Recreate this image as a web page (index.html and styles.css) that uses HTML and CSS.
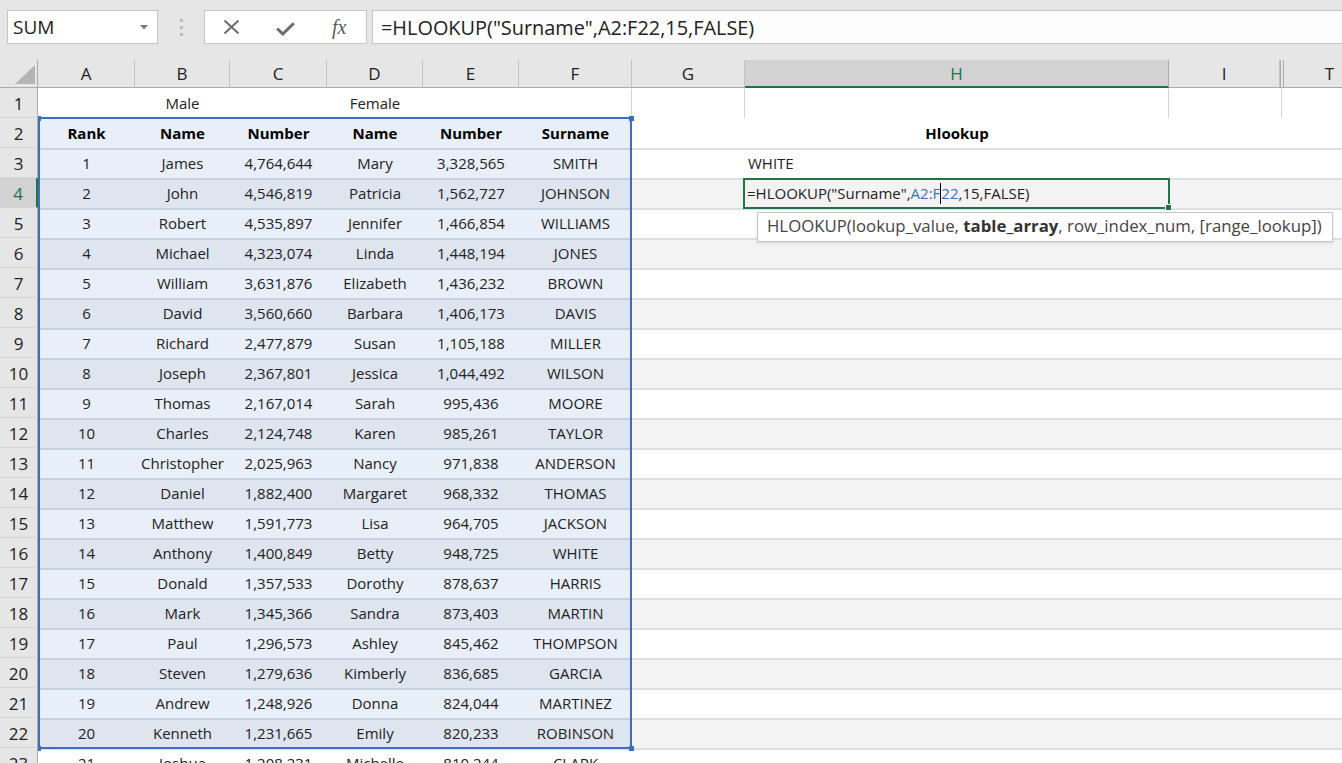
FILE: index.html
```html
<!DOCTYPE html>
<html>
<head>
<meta charset="utf-8">
<link rel="stylesheet" href="styles.css">
</head>
<body>
<div class="topbar">
  <div class="namebox"><span>SUM</span><svg width="8" height="5" viewBox="0 0 8 5"><polygon points="0,0 8,0 4,4.5" fill="#7a7a7a"/></svg></div>
  <div class="grip"><i></i><i></i><i></i></div>
  <div class="fxbtns">
    <div class="fxbtn"><svg width="17" height="16" viewBox="0 0 17 16"><path d="M1.5 1.5 L15.5 14.5 M15.5 1.5 L1.5 14.5" stroke="#6b6b6b" stroke-width="2" fill="none"/></svg></div>
    <div class="fxbtn chk"><svg width="19" height="14" viewBox="0 0 19 14"><polyline points="1.2,6.5 6.8,12 17.8,1.2" stroke="#6b6b6b" stroke-width="3" fill="none"/></svg></div>
    <div class="fxbtn fx">fx</div>
  </div>
  <div class="formula">=HLOOKUP("Surname",A2:F22,15,FALSE)</div>
</div>

<div class="colhead">
  <div class="corner"><svg width="20" height="19" viewBox="0 0 20 19"><polygon points="20,0 20,19 0,19" fill="#b4b4b4"/></svg></div>
  <div class="hc ca">A</div><div class="hc cb">B</div><div class="hc cc">C</div><div class="hc cd">D</div><div class="hc ce">E</div><div class="hc cf">F</div><div class="hc cg">G</div><div class="hc ch hsel">H</div><div class="hc ci">I</div><div class="hc cx"></div><div class="hc ct">T</div>
</div>

<div class="grid">
  <div class="row r1"><div class="rh">1</div><div class="tbl"><div class="c ca"></div><div class="c cb">Male</div><div class="c cc"></div><div class="c cd">Female</div><div class="c ce"></div><div class="c cf"></div></div><div class="rest"><div class="c cg"></div><div class="c ch"></div><div class="c ci"></div><div class="c cx"></div><div class="c ct"></div></div></div>
  <div class="row light"><div class="rh">2</div><div class="tbl b"><div class="c ca">Rank</div><div class="c cb">Name</div><div class="c cc">Number</div><div class="c cd">Name</div><div class="c ce">Number</div><div class="c cf">Surname</div></div><div class="rest"><div class="c cg"></div><div class="c ch b">Hlookup</div><div class="c ci"></div><div class="c cx"></div><div class="c ct"></div></div></div>
  <div class="row lined light"><div class="rh">3</div><div class="tbl"><div class="c ca">1</div><div class="c cb">James</div><div class="c cc">4,764,644</div><div class="c cd">Mary</div><div class="c ce">3,328,565</div><div class="c cf">SMITH</div></div><div class="rest"><div class="c cg"></div><div class="c ch left">WHITE</div><div class="c ci"></div><div class="c cx"></div><div class="c ct"></div></div></div>
  <div class="row lined dark"><div class="rh sel">4</div><div class="tbl"><div class="c ca">2</div><div class="c cb">John</div><div class="c cc">4,546,819</div><div class="c cd">Patricia</div><div class="c ce">1,562,727</div><div class="c cf">JOHNSON</div></div><div class="rest"><div class="c cg"></div><div class="c ch editcell">
    <div class="editor"><span>=HLOOKUP("Surname",<span class="ref">A2:F</span><span class="caret"></span><span class="ref">22</span>,15,FALSE)</span><span class="fill"></span></div>
    <div class="tip">HLOOKUP(lookup_value,&nbsp;<b>table_array</b>, row_index_num, [range_lookup])</div>
  </div><div class="c ci"></div><div class="c cx"></div><div class="c ct"></div></div></div>
  <div class="row lined light"><div class="rh">5</div><div class="tbl"><div class="c ca">3</div><div class="c cb">Robert</div><div class="c cc">4,535,897</div><div class="c cd">Jennifer</div><div class="c ce">1,466,854</div><div class="c cf">WILLIAMS</div></div><div class="rest"><div class="c cg"></div><div class="c ch"></div><div class="c ci"></div><div class="c cx"></div><div class="c ct"></div></div></div>
  <div class="row lined dark"><div class="rh">6</div><div class="tbl"><div class="c ca">4</div><div class="c cb">Michael</div><div class="c cc">4,323,074</div><div class="c cd">Linda</div><div class="c ce">1,448,194</div><div class="c cf">JONES</div></div><div class="rest"><div class="c cg"></div><div class="c ch"></div><div class="c ci"></div><div class="c cx"></div><div class="c ct"></div></div></div>
  <div class="row lined light"><div class="rh">7</div><div class="tbl"><div class="c ca">5</div><div class="c cb">William</div><div class="c cc">3,631,876</div><div class="c cd">Elizabeth</div><div class="c ce">1,436,232</div><div class="c cf">BROWN</div></div><div class="rest"><div class="c cg"></div><div class="c ch"></div><div class="c ci"></div><div class="c cx"></div><div class="c ct"></div></div></div>
  <div class="row lined dark"><div class="rh">8</div><div class="tbl"><div class="c ca">6</div><div class="c cb">David</div><div class="c cc">3,560,660</div><div class="c cd">Barbara</div><div class="c ce">1,406,173</div><div class="c cf">DAVIS</div></div><div class="rest"><div class="c cg"></div><div class="c ch"></div><div class="c ci"></div><div class="c cx"></div><div class="c ct"></div></div></div>
  <div class="row lined light"><div class="rh">9</div><div class="tbl"><div class="c ca">7</div><div class="c cb">Richard</div><div class="c cc">2,477,879</div><div class="c cd">Susan</div><div class="c ce">1,105,188</div><div class="c cf">MILLER</div></div><div class="rest"><div class="c cg"></div><div class="c ch"></div><div class="c ci"></div><div class="c cx"></div><div class="c ct"></div></div></div>
  <div class="row lined dark"><div class="rh">10</div><div class="tbl"><div class="c ca">8</div><div class="c cb">Joseph</div><div class="c cc">2,367,801</div><div class="c cd">Jessica</div><div class="c ce">1,044,492</div><div class="c cf">WILSON</div></div><div class="rest"><div class="c cg"></div><div class="c ch"></div><div class="c ci"></div><div class="c cx"></div><div class="c ct"></div></div></div>
  <div class="row lined light"><div class="rh">11</div><div class="tbl"><div class="c ca">9</div><div class="c cb">Thomas</div><div class="c cc">2,167,014</div><div class="c cd">Sarah</div><div class="c ce">995,436</div><div class="c cf">MOORE</div></div><div class="rest"><div class="c cg"></div><div class="c ch"></div><div class="c ci"></div><div class="c cx"></div><div class="c ct"></div></div></div>
  <div class="row lined dark"><div class="rh">12</div><div class="tbl"><div class="c ca">10</div><div class="c cb">Charles</div><div class="c cc">2,124,748</div><div class="c cd">Karen</div><div class="c ce">985,261</div><div class="c cf">TAYLOR</div></div><div class="rest"><div class="c cg"></div><div class="c ch"></div><div class="c ci"></div><div class="c cx"></div><div class="c ct"></div></div></div>
  <div class="row lined light"><div class="rh">13</div><div class="tbl"><div class="c ca">11</div><div class="c cb">Christopher</div><div class="c cc">2,025,963</div><div class="c cd">Nancy</div><div class="c ce">971,838</div><div class="c cf">ANDERSON</div></div><div class="rest"><div class="c cg"></div><div class="c ch"></div><div class="c ci"></div><div class="c cx"></div><div class="c ct"></div></div></div>
  <div class="row lined dark"><div class="rh">14</div><div class="tbl"><div class="c ca">12</div><div class="c cb">Daniel</div><div class="c cc">1,882,400</div><div class="c cd">Margaret</div><div class="c ce">968,332</div><div class="c cf">THOMAS</div></div><div class="rest"><div class="c cg"></div><div class="c ch"></div><div class="c ci"></div><div class="c cx"></div><div class="c ct"></div></div></div>
  <div class="row lined light"><div class="rh">15</div><div class="tbl"><div class="c ca">13</div><div class="c cb">Matthew</div><div class="c cc">1,591,773</div><div class="c cd">Lisa</div><div class="c ce">964,705</div><div class="c cf">JACKSON</div></div><div class="rest"><div class="c cg"></div><div class="c ch"></div><div class="c ci"></div><div class="c cx"></div><div class="c ct"></div></div></div>
  <div class="row lined dark"><div class="rh">16</div><div class="tbl"><div class="c ca">14</div><div class="c cb">Anthony</div><div class="c cc">1,400,849</div><div class="c cd">Betty</div><div class="c ce">948,725</div><div class="c cf">WHITE</div></div><div class="rest"><div class="c cg"></div><div class="c ch"></div><div class="c ci"></div><div class="c cx"></div><div class="c ct"></div></div></div>
  <div class="row lined light"><div class="rh">17</div><div class="tbl"><div class="c ca">15</div><div class="c cb">Donald</div><div class="c cc">1,357,533</div><div class="c cd">Dorothy</div><div class="c ce">878,637</div><div class="c cf">HARRIS</div></div><div class="rest"><div class="c cg"></div><div class="c ch"></div><div class="c ci"></div><div class="c cx"></div><div class="c ct"></div></div></div>
  <div class="row lined dark"><div class="rh">18</div><div class="tbl"><div class="c ca">16</div><div class="c cb">Mark</div><div class="c cc">1,345,366</div><div class="c cd">Sandra</div><div class="c ce">873,403</div><div class="c cf">MARTIN</div></div><div class="rest"><div class="c cg"></div><div class="c ch"></div><div class="c ci"></div><div class="c cx"></div><div class="c ct"></div></div></div>
  <div class="row lined light"><div class="rh">19</div><div class="tbl"><div class="c ca">17</div><div class="c cb">Paul</div><div class="c cc">1,296,573</div><div class="c cd">Ashley</div><div class="c ce">845,462</div><div class="c cf">THOMPSON</div></div><div class="rest"><div class="c cg"></div><div class="c ch"></div><div class="c ci"></div><div class="c cx"></div><div class="c ct"></div></div></div>
  <div class="row lined dark"><div class="rh">20</div><div class="tbl"><div class="c ca">18</div><div class="c cb">Steven</div><div class="c cc">1,279,636</div><div class="c cd">Kimberly</div><div class="c ce">836,685</div><div class="c cf">GARCIA</div></div><div class="rest"><div class="c cg"></div><div class="c ch"></div><div class="c ci"></div><div class="c cx"></div><div class="c ct"></div></div></div>
  <div class="row lined light"><div class="rh">21</div><div class="tbl"><div class="c ca">19</div><div class="c cb">Andrew</div><div class="c cc">1,248,926</div><div class="c cd">Donna</div><div class="c ce">824,044</div><div class="c cf">MARTINEZ</div></div><div class="rest"><div class="c cg"></div><div class="c ch"></div><div class="c ci"></div><div class="c cx"></div><div class="c ct"></div></div></div>
  <div class="row lined dark"><div class="rh">22</div><div class="tbl"><div class="c ca">20</div><div class="c cb">Kenneth</div><div class="c cc">1,231,665</div><div class="c cd">Emily</div><div class="c ce">820,233</div><div class="c cf">ROBINSON</div></div><div class="rest"><div class="c cg"></div><div class="c ch"></div><div class="c ci"></div><div class="c cx"></div><div class="c ct"></div></div></div>
  <div class="row lined plain"><div class="rh">23</div><div class="tbl"><div class="c ca">21</div><div class="c cb">Joshua</div><div class="c cc">1,208,231</div><div class="c cd">Michelle</div><div class="c ce">810,244</div><div class="c cf">CLARK</div></div><div class="rest"><div class="c cg"></div><div class="c ch"></div><div class="c ci"></div><div class="c cx"></div><div class="c ct"></div></div></div>

  <div class="selrange"></div>
  <div class="hd tl"></div><div class="hd tr"></div><div class="hd bl"></div><div class="hd br"></div>
</div>
</body>
</html>
```

FILE: styles.css
```css
html, body {
  margin: 0;
  padding: 0;
}
body {
  width: 1342px;
  height: 763px;
  overflow: hidden;
  background: #ffffff;
  color: #222222;
  font-family: "Open Sans", "Noto Sans", sans-serif;
}

/* ---------- formula bar ---------- */
.topbar {
  height: 60px;
  box-sizing: border-box;
  padding-top: 10px;
  background: #e6e6e6;
  display: flex;
  align-items: flex-start;
}
.namebox {
  margin-left: 7px;
  width: 151px;
  height: 34px;
  box-sizing: border-box;
  border: 1px solid #c6c6c6;
  background: #ffffff;
  display: flex;
  align-items: center;
  justify-content: space-between;
  padding: 0 9px 0 5px;
  font-size: 19px;
  color: #222;
}
.grip {
  width: 46px;
  height: 34px;
  display: flex;
  flex-direction: column;
  align-items: center;
  gap: 4px;
  padding-top: 9px;
  box-sizing: border-box;
}
.grip i {
  display: block;
  width: 3px;
  height: 3px;
  background: #b8b8b8;
}
.fxbtns {
  width: 163px;
  height: 34px;
  box-sizing: border-box;
  border: 1px solid #c6c6c6;
  background: #ffffff;
  display: flex;
}
.fxbtn {
  width: 54px;
  height: 32px;
  display: flex;
  align-items: center;
  justify-content: center;
}
.fxbtn.chk svg {
  margin-top: 4px;
}
.fxbtn.fx {
  font-family: "Liberation Serif", "DejaVu Serif", serif;
  font-style: italic;
  font-size: 20px;
  color: #5a5a5a;
  padding-top: 1px;
  box-sizing: border-box;
}
.formula {
  margin-left: 5px;
  flex: 1;
  height: 34px;
  box-sizing: border-box;
  border: 1px solid #c6c6c6;
  border-right: none;
  background: #fdfdfd;
  padding-left: 8px;
  display: flex;
  align-items: center;
  font-size: 19.9px;
  color: #222;
  white-space: nowrap;
}

/* ---------- column widths ---------- */
.ca { width: 97px; }
.cb { width: 95px; }
.cc { width: 97px; }
.cd { width: 96px; }
.ce { width: 96px; }
.cf { width: 113px; }
.cg { width: 113px; }
.ch { width: 424px; }
.ci { width: 111px; }
.cx { width: 4px; }
.ct { width: 92px; }

/* ---------- column header ---------- */
.colhead {
  height: 28px;
  display: flex;
  background: #e6e6e6;
  overflow: hidden;
}
.corner {
  width: 38px;
  flex: none;
  box-sizing: border-box;
  border-right: 1px solid #ababab;
  border-bottom: 1px solid #ababab;
  display: flex;
  align-items: flex-end;
  justify-content: flex-end;
  padding: 0 2px 3px 0;
}
.hc {
  flex: none;
  height: 28px;
  box-sizing: border-box;
  border-right: 1px solid #c2c2c2;
  border-bottom: 1px solid #ababab;
  display: flex;
  align-items: center;
  justify-content: center;
  font-size: 17px;
  color: #222;
}
.hc.cx {
  border-left: 1px solid #ababab;
  border-right: 1px solid #ababab;
}
.hc.hsel {
  background: #d2d2d2;
  color: #217346;
  border-bottom: 2px solid #217346;
  border-right-color: #ababab;
}

/* ---------- grid ---------- */
.grid {
  position: relative;
}
.row {
  display: flex;
  height: 30px;
}
.rh {
  width: 38px;
  flex: none;
  box-sizing: border-box;
  border-right: 1px solid #ababab;
  border-bottom: 1px solid #d4d4d4;
  background: #e6e6e6;
  display: flex;
  align-items: center;
  justify-content: center;
  font-size: 17px;
  color: #222;
  padding-top: 1px;
}
.rh.sel {
  background: #d2d2d2;
  color: #217346;
  border-right: 2px solid #217346;
}
.tbl {
  width: 594px;
  flex: none;
  display: flex;
}
.rest {
  flex: none;
  width: 744px;
  display: flex;
}
.c {
  flex: none;
  height: 30px;
  box-sizing: border-box;
  border-top: 2px solid transparent;
  padding-bottom: 2px;
  display: flex;
  align-items: center;
  justify-content: center;
  font-size: 15px;
  color: #222;
  white-space: nowrap;
  overflow: hidden;
}
.b .c, .c.b {
  font-weight: 700;
  color: #000;
}
.c.left {
  justify-content: flex-start;
  padding-left: 3px;
}

.lined .tbl .c { border-top-color: #c6d2e0; }
.lined .rest .c { border-top-color: #dae0e4; }
.plain .tbl .c { border-top-color: #dae0e4; }

.light .tbl { background: #e9eff8; }
.dark .tbl { background: #dfe5ef; }
.dark .rest { background: #f3f3f3; }

/* row 1 gridlines */
.r1 .cf, .r1 .cg, .r1 .ch {
  border-right: 1px solid #d4d4d4;
}
.r1 .cx {
  background: linear-gradient(to right, transparent 1px, #d4d4d4 1px, #d4d4d4 2px, transparent 2px);
}

/* ---------- editing cell ---------- */
.c.editcell {
  position: relative;
  overflow: visible;
}
.editor {
  position: absolute;
  left: -2px;
  top: -2px;
  width: 427px;
  height: 31px;
  box-sizing: border-box;
  border: 2px solid #217346;
  background: #f3f3f3;
  display: flex;
  align-items: center;
  padding-left: 2px;
  font-size: 15px;
  color: #222;
  white-space: nowrap;
  z-index: 2;
}
.ref {
  color: #3a6fc4;
}
.caret {
  display: inline-block;
  width: 1px;
  height: 21px;
  background: #000;
  vertical-align: middle;
  margin-top: -2px;
}
.fill {
  position: absolute;
  right: -4px;
  bottom: -4px;
  width: 5px;
  height: 5px;
  background: #217346;
  border: 1px solid #ffffff;
}
.tip {
  position: absolute;
  left: 12px;
  top: 32px;
  width: 576px;
  height: 30px;
  box-sizing: border-box;
  border: 1px solid #c6c6c6;
  background: #ffffff;
  box-shadow: 0 1px 3px rgba(0, 0, 0, 0.12);
  padding-left: 9px;
  padding-bottom: 3px;
  display: flex;
  align-items: center;
  font-size: 16.8px;
  color: #444;
  white-space: nowrap;
  z-index: 3;
}
.tip b {
  color: #333;
  font-weight: 700;
}

/* ---------- selected range ---------- */
.selrange {
  position: absolute;
  left: 38px;
  top: 29px;
  width: 594px;
  height: 632px;
  box-sizing: border-box;
  border: 2px solid #3a6fc4;
  z-index: 1;
}
.hd {
  position: absolute;
  background: #3a6fc4;
  z-index: 1;
}
.hd.tl { left: 38px; top: 28px; width: 3px; height: 5px; }
.hd.tr { left: 629px; top: 28px; width: 5px; height: 5px; }
.hd.bl { left: 38px; top: 658px; width: 3px; height: 5px; }
.hd.br { left: 629px; top: 658px; width: 5px; height: 5px; }
```
